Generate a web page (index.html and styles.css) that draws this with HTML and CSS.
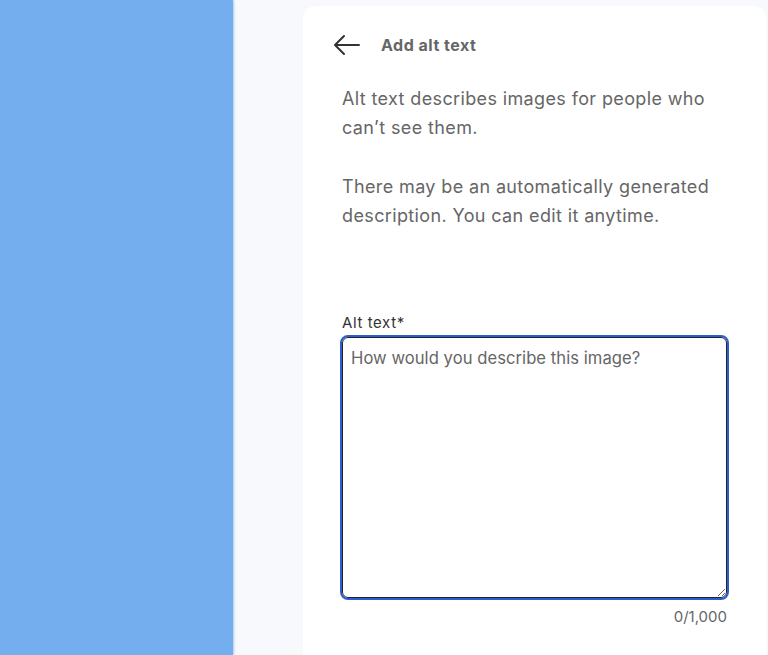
FILE: index.html
```html
<!DOCTYPE html>
<html>
<head>
<meta charset="utf-8">
<link rel="stylesheet" href="styles.css">
</head>
<body>
<div class="layout">
  <div class="media"></div>
  <div class="side">
    <div class="card">
      <div class="header">
        <button class="back" aria-label="Back">
          <svg width="28" height="22" viewBox="0 0 28 22" fill="none" stroke="#333" stroke-width="2" stroke-linecap="round" stroke-linejoin="round"><path d="M26 11H2M11 2L2 11l9 9"/></svg>
        </button>
        <h1 class="title">Add alt text</h1>
      </div>
      <div class="body">
        <p class="desc">Alt text describes images for people who can’t see them.</p>
        <p class="desc">There may be an automatically generated description. You can edit it anytime.</p>
        <label class="label" for="alt">Alt text*</label>
        <textarea id="alt" class="input" placeholder="How would you describe this image?"></textarea>
        <div class="count">0/1,000</div>
      </div>
    </div>
  </div>
</div>
</body>
</html>
```

FILE: styles.css
```css
html, body {
  margin: 0;
  padding: 0;
}
body {
  font-family: Inter, "Noto Sans", "Liberation Sans", sans-serif;
  background: #f8f9fd;
}
.layout {
  display: flex;
  height: 655px;
  overflow: hidden;
}
.media {
  width: 233px;
  flex: none;
  background: #74aeee;
  box-shadow: 1px 0 2px rgba(116, 174, 238, 0.6);
}
.side {
  flex: 1;
  display: flex;
  flex-direction: column;
  padding: 6px 2px 0 70px;
}
.card {
  flex: 1;
  background: #fff;
  border-radius: 12px 12px 0 0;
  padding: 0 39px 0 30px;
}
.header {
  display: flex;
  align-items: center;
  height: 78px;
}
.back {
  border: 0;
  background: none;
  padding: 0;
  width: 28px;
  height: 22px;
  display: flex;
  margin-right: 20px;
}
.title {
  margin: 0;
  font-size: 16px;
  letter-spacing: 0.5px;
  font-weight: 700;
  color: #666;
}
.body {
  padding-left: 9px;
}
.desc {
  margin: 0 0 30px;
  font-size: 18px;
  letter-spacing: 0.37px;
  line-height: 29px;
  color: #666;
}
.desc + .desc {
  margin-bottom: 83px;
}
.label {
  display: block;
  font-size: 15px;
  letter-spacing: 0.6px;
  color: #333;
  line-height: 20px;
  margin-bottom: 4px;
}
.input {
  display: block;
  box-sizing: border-box;
  width: 100%;
  height: 261px;
  border: 1px solid #222;
  border-radius: 6px;
  outline: 2px solid #2b5fd0;
  outline-offset: 0;
  margin: 2px 0 0;
  padding: 10px 8px 8px;
  font-family: inherit;
  font-size: 16.6px;
  letter-spacing: 0.05px;
  color: #333;
  resize: vertical;
}
.input::placeholder {
  color: #666;
}
.count {
  text-align: right;
  font-size: 15px;
  color: #666;
  margin-top: 9px;
}
```
